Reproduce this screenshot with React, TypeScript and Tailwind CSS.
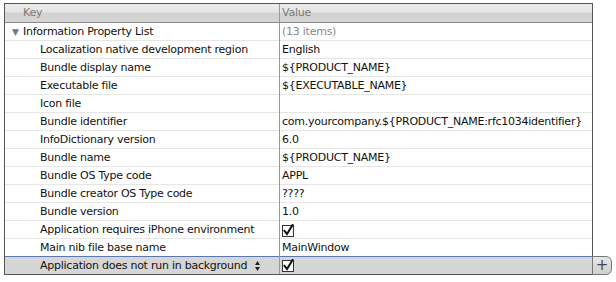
import React from "react";

const rows: { k: string; v: string; check?: boolean }[] = [
  { k: "Localization native development region", v: "English" },
  { k: "Bundle display name", v: "${PRODUCT_NAME}" },
  { k: "Executable file", v: "${EXECUTABLE_NAME}" },
  { k: "Icon file", v: "" },
  { k: "Bundle identifier", v: "com.yourcompany.${PRODUCT_NAME:rfc1034identifier}" },
  { k: "InfoDictionary version", v: "6.0" },
  { k: "Bundle name", v: "${PRODUCT_NAME}" },
  { k: "Bundle OS Type code", v: "APPL" },
  { k: "Bundle creator OS Type code", v: "????" },
  { k: "Bundle version", v: "1.0" },
  { k: "Application requires iPhone environment", v: "", check: true },
  { k: "Main nib file base name", v: "MainWindow" },
];

function Check() {
  return (
    <svg width="13" height="13" viewBox="0 0 13 13" className="block">
      <rect x="0.5" y="1.5" width="11" height="11" fill="#fff" stroke="#333" />
      <path d="M2.5 7 L5 10 L10.5 1" fill="none" stroke="#111" strokeWidth="2" strokeLinecap="square" />
    </svg>
  );
}

export default function App() {
  return (
    <div className="w-[616px] h-[282px] bg-white pt-[3px] pl-[4px]" style={{ fontFamily: '"DejaVu Sans", sans-serif' }}>
      <div className="flex items-end">
        <div className="w-[589px] border border-[#555] text-[11px] tracking-[-0.25px] text-[#111]">
          <div className="grid grid-cols-[275px_1fr] h-[19px] bg-[linear-gradient(#ececec_0%,#e4e4e4_45%,#d2d2d2_50%,#d6d6d6_100%)] border-b border-[#888] text-[#7a7a7a]">
            <div className="pl-[18px] leading-[18px] border-r border-[#999]">Key</div>
            <div className="pl-[2px] leading-[18px]">Value</div>
          </div>
          <div className="grid grid-cols-[275px_1fr] h-[18px] border-b border-[#e6e6e6]">
            <div className="flex items-center border-r border-[#999] leading-[18px]">
              <span className="w-[18px] pl-[7px] text-[9px] text-[#777]">▼</span>
              <span>Information Property List</span>
            </div>
            <div className="pl-[2px] leading-[18px] text-[#888]">(13 items)</div>
          </div>
          {rows.map((r, i) => (
            <div key={i} className="grid grid-cols-[275px_1fr] h-[18px] border-b border-[#e6e6e6]">
              <div className="pl-[35px] leading-[18px] border-r border-[#999] whitespace-nowrap">{r.k}</div>
              <div className="pl-[2px] leading-[18px] whitespace-nowrap flex items-center">{r.check ? <Check /> : r.v}</div>
            </div>
          ))}
          <div className="grid grid-cols-[275px_1fr] h-[18px] bg-[#d6d6d6] border-t border-[#5b77b0] -mt-px">
            <div className="pl-[35px] leading-[16px] border-r border-[#999] whitespace-nowrap flex items-center justify-between pr-[19px]">
              <span>Application does not run in background</span>
              <svg width="5" height="12" viewBox="0 0 5 12">
                <path d="M2.5 1 L5 5 L0 5 Z" fill="#222" />
                <path d="M0 7 L5 7 L2.5 11 Z" fill="#222" />
              </svg>
            </div>
            <div className="pl-[2px] flex items-center"><Check /></div>
          </div>
        </div>
        <div className="w-[20px] h-[19px] -ml-px border border-[#777] rounded-r-[6px] bg-[linear-gradient(#e6e6e6,#d0d0d0)] flex items-center justify-center text-[#444] text-[15px] leading-none">+</div>
      </div>
    </div>
  );
}
